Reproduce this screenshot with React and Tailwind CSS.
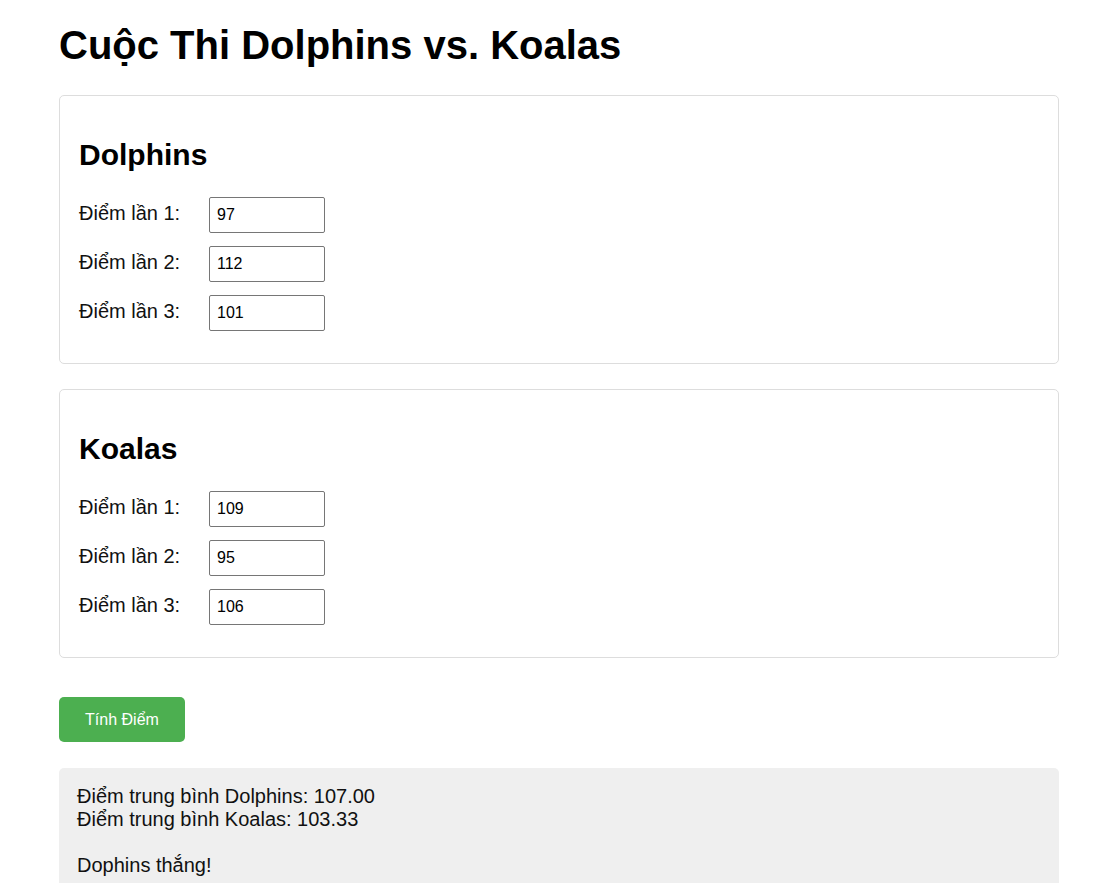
import { useState } from "react";

const teams = [
  { name: "Dolphins", scores: ["97", "112", "101"] },
  { name: "Koalas", scores: ["109", "95", "106"] },
];

function TeamCard({ team }) {
  return (
    <section className="border border-[#dddddd] rounded-[5px] px-[19px] pt-[20px] pb-[32px]">
      <h2 className="mt-[22px] text-[30px] font-bold leading-[34.5px] text-black">
        {team.name}
      </h2>

      <div className="mt-[24.5px] flex flex-col gap-[13px]">
        {team.scores.map((score, i) => (
          <div key={i} className="flex items-baseline">
            <label className="w-[130px] text-[20px] leading-[23px] text-[#111111]">
              Điểm lần {i + 1}:
            </label>
            <input
              type="text"
              defaultValue={score}
              className="w-[116px] h-[36px] border border-[#767676] rounded-[2px] px-[7px] text-[16px] text-black bg-white outline-none"
            />
          </div>
        ))}
      </div>
    </section>
  );
}

export default function App() {
  const [shown] = useState(true);

  return (
    <main className="min-h-screen bg-white pl-[59px] pr-[35px] font-['Liberation_Sans',Arial,sans-serif]">
      {/* HEADER */}
      <h1 className="pt-[22px] text-[40px] font-bold leading-[46px] text-black">
        Cuộc Thi Dolphins vs. Koalas
      </h1>

      <div className="w-[1000px] mt-[27px] flex flex-col gap-[25px]">
        {teams.map((team) => (
          <TeamCard key={team.name} team={team} />
        ))}
      </div>

      <button className="block mt-[39px] w-[126px] h-[45px] rounded-[5px] bg-[#4caf50] text-white text-[16px] leading-[18px]">
        Tính Điểm
      </button>

      {/* RESULT */}
      {shown && (
        <div className="w-[1000px] mt-[26px] bg-[#efefef] rounded-[5px] px-[18px] pt-[17px] pb-[20px] text-[20px] leading-[23px] text-[#111111]">
          Điểm trung bình Dolphins: 107.00
          <br />
          Điểm trung bình Koalas: 103.33
          <br />
          <br />
          Dophins thắng!
        </div>
      )}
    </main>
  );
}
